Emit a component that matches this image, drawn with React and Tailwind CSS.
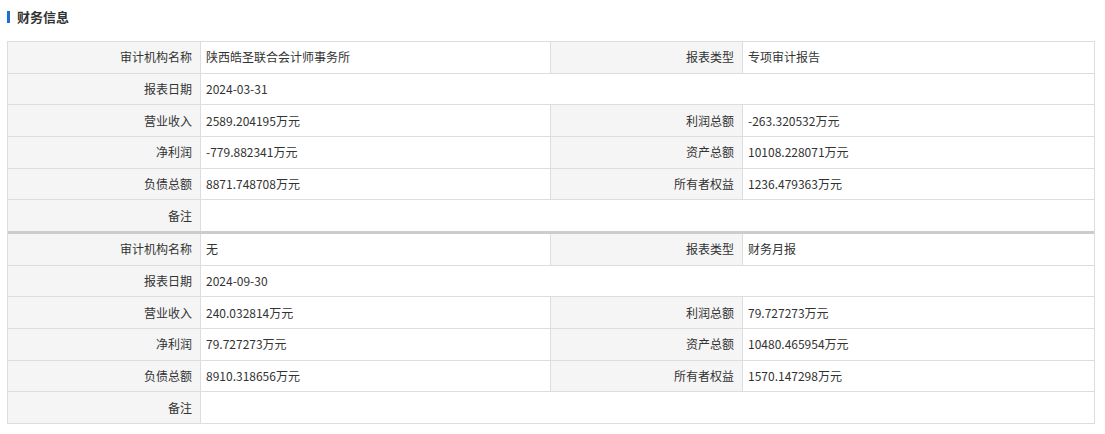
const reports = [
  {
    org: "陕西皓圣联合会计师事务所",
    type: "专项审计报告",
    date: "2024-03-31",
    revenue: "2589.204195万元",
    profit: "-263.320532万元",
    netProfit: "-779.882341万元",
    assets: "10108.228071万元",
    debt: "8871.748708万元",
    equity: "1236.479363万元",
    remark: "",
  },
  {
    org: "无",
    type: "财务月报",
    date: "2024-09-30",
    revenue: "240.032814万元",
    profit: "79.727273万元",
    netProfit: "79.727273万元",
    assets: "10480.465954万元",
    debt: "8910.318656万元",
    equity: "1570.147298万元",
    remark: "",
  },
];

const Label = ({ children, border = true }) => (
  <div
    className={`w-[192px] shrink-0 h-[30.67px] flex items-center justify-end pr-2 bg-[#f5f5f5] ${border ? "border-l border-[#dddddd]" : ""}`}
  >
    {children}
  </div>
);

const Value = ({ children, wide }) => (
  <div
    className={`${wide ? "flex-1" : "w-[350px] shrink-0"} h-[30.67px] flex items-center pl-[5px] border-l border-[#dddddd] text-[#333]`}
  >
    {children}
  </div>
);

const Row = ({ first, thick, children }) => (
  <div
    className={`flex ${first ? "" : thick ? "border-t-[3px] border-[#cccccc]" : "border-t border-[#dddddd]"}`}
  >
    {children}
  </div>
);

export default function App() {
  return (
    <div
      className="w-[1105px] h-[434px] bg-white text-[12px] text-[#333]"
      style={{ fontFamily: '"Microsoft YaHei", "Noto Sans CJK SC", sans-serif' }}
    >
      <div className="flex items-center h-[34px] pl-[7px]">
        <span className="w-[3px] h-[12px] bg-[#1d6fd6] mr-[7px]" />
        <span className="text-[13px] font-bold text-[#333]">财务信息</span>
      </div>

      <div className="ml-[7px] mt-[7px] w-[1088px] border border-[#dddddd]">
        {reports.map((r, i) => (
          <div key={i}>
            <Row first={i === 0} thick={i > 0}>
              <Label border={false}>审计机构名称</Label>
              <Value>{r.org}</Value>
              <Label>报表类型</Label>
              <Value wide>{r.type}</Value>
            </Row>
            <Row>
              <Label border={false}>报表日期</Label>
              <Value wide>{r.date}</Value>
            </Row>
            <Row>
              <Label border={false}>营业收入</Label>
              <Value>{r.revenue}</Value>
              <Label>利润总额</Label>
              <Value wide>{r.profit}</Value>
            </Row>
            <Row>
              <Label border={false}>净利润</Label>
              <Value>{r.netProfit}</Value>
              <Label>资产总额</Label>
              <Value wide>{r.assets}</Value>
            </Row>
            <Row>
              <Label border={false}>负债总额</Label>
              <Value>{r.debt}</Value>
              <Label>所有者权益</Label>
              <Value wide>{r.equity}</Value>
            </Row>
            <Row>
              <Label border={false}>备注</Label>
              <Value wide>{r.remark}</Value>
            </Row>
          </div>
        ))}
      </div>
    </div>
  );
}
